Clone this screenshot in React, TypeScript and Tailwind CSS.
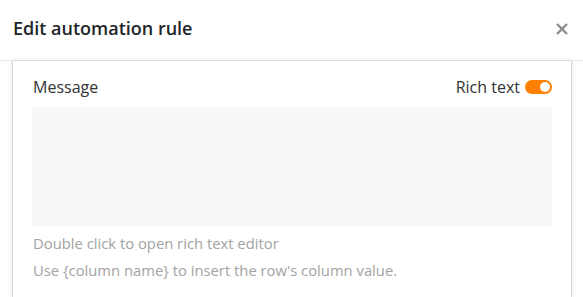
import { useState } from "react";

function Toggle({ on }: { on: boolean }) {
  return (
    <span
      className={`relative inline-flex h-[14px] w-[27px] items-center rounded-full ${
        on ? "bg-[#ff8000]" : "bg-[#ccc]"
      }`}
    >
      <span
        className={`absolute h-[10px] w-[10px] rounded-full bg-white ${on ? "right-[2px]" : "left-[2px]"}`}
      />
    </span>
  );
}

export default function App() {
  const [richText] = useState(true);

  return (
    <div
      className="h-[297px] w-[583px] overflow-hidden bg-white"
      style={{ fontFamily: '"Open Sans", "Noto Sans", sans-serif' }}
    >
      <header className="flex h-[61px] items-center justify-between border-b border-[#e6e6e6] pb-[3px] pl-[13px] pr-[11px]">
        <h1 className="text-[18px] font-semibold text-[#212529]">Edit automation rule</h1>
        <button aria-label="Close" className="flex h-5 w-5 items-center justify-center text-[#8c8c8c]">
          <svg viewBox="0 0 12 12" className="h-[12px] w-[12px]" fill="none" stroke="currentColor" strokeWidth="2.4">
            <path d="M1 1l10 10M11 1L1 11" />
          </svg>
        </button>
      </header>

      <div className="ml-[12px] h-[236px] w-[560px] border-x border-[#d9d9d9] bg-white px-[19px] pt-[14px] shadow-[0_0_5px_rgba(0,0,0,0.12)]">
        <div className="flex h-6 items-end justify-between">
          <span className="pl-px text-[16px] leading-6 text-[#333]">Message</span>
          <span className="flex items-center gap-[5px] pt-2 text-[16px] leading-6 text-[#333]">
            Rich text
            <Toggle on={richText} />
          </span>
        </div>
        <div className="mt-[8px] h-[120px] bg-[#f8f8f8]" />
        <p className="mt-[6px] pl-px text-[14.8px] leading-5 text-[#a3a3a3]">Double click to open rich text editor</p>
        <p className="mt-[7px] pl-px text-[14.8px] leading-5 text-[#a3a3a3]">
          Use {"{column name}"} to insert the row's column value.
        </p>
      </div>
    </div>
  );
}
